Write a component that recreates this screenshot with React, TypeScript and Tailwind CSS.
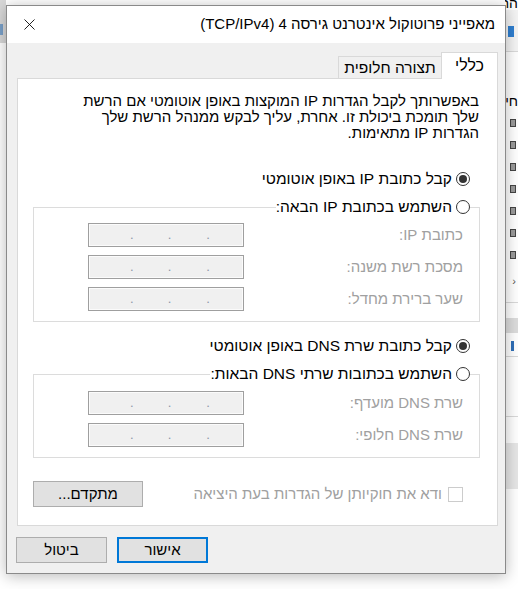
import { X } from "lucide-react";

function Radio({ checked, label }: { checked?: boolean; label: string }) {
  return (
    <div className="flex items-center gap-[4px] h-[20px] bg-white">
      <span className="w-[14px] h-[14px] rounded-full border border-[#333333] bg-white flex items-center justify-center">
        {checked && <span className="w-[8px] h-[8px] rounded-full bg-[#333333]" />}
      </span>
      <span className="text-[15.5px] text-black leading-[20px]">{label}</span>
    </div>
  );
}

function IpField() {
  return (
    <div
      dir="ltr"
      className="w-[156px] h-[24px] border border-[#9f9f9f] bg-[#f0f0f0] shadow-[inset_0_0_0_1px_#fbfbfb] flex items-end pb-[5px] pl-[41px] text-[13px] leading-none text-[#8c96a8]"
    >
      <span>.</span>
      <span className="ml-[34px]">.</span>
      <span className="ml-[35px]">.</span>
    </div>
  );
}

function IpRow({ label }: { label: string }) {
  return (
    <div className="flex items-center justify-between h-[24px] pr-[16px] pl-[54px]">
      <span className="text-[15px] text-[#a0a0a0]">{label}</span>
      <IpField />
    </div>
  );
}

function Button({ label, primary }: { label: string; primary?: boolean }) {
  return (
    <button
      className={
        primary
          ? "w-[91px] h-[26px] border-2 border-[#0078d7] bg-[#e1e1e1] text-[15px] text-black"
          : "w-[91px] h-[26px] border border-[#adadad] bg-[#e1e1e1] text-[15px] text-black"
      }
    >
      {label}
    </button>
  );
}

function Backdrop() {
  return (
    <div className="absolute inset-0 flex justify-between bg-white">
      {/* left edge of window behind */}
      <div className="w-[6px] flex flex-col">
        <div className="h-[43px] bg-[#d8d8d8] flex flex-col pt-[24px]">
          <div className="w-[3px] h-[11px] bg-[#7aa0c8]" />
        </div>
      </div>

      {/* right edge of window behind */}
      <div dir="rtl" className="w-[13px] flex flex-col overflow-hidden text-[14px]">
        <div className="h-[10px] overflow-hidden">
          <div className="-mt-[7px] whitespace-nowrap text-black">התחבר באמצעות:</div>
        </div>
        <div className="h-[42px] bg-[#f4f4f4] border-b border-[#d9d9d9] flex flex-col items-end pt-[16px] pl-[3px]">
          <div className="w-[6px] h-[11px] bg-[#2f7fd0]" />
        </div>
        <div className="h-[40px]" />
        <div className="h-[18px] whitespace-nowrap leading-[18px] text-black">חיבור</div>
        <div className="flex flex-col gap-[14px] pt-[9px] items-end pl-[5px]">
          {[0, 1, 2, 3, 4, 5, 6].map((i) => (
            <div key={i} className="w-[6px] h-[8px] border border-[#444] bg-[#9a9a9a]" />
          ))}
        </div>
        <div className="h-[18px] mt-[14px] text-[#555] text-[11px] pr-[2px]">‹</div>
        <div className="h-[12px] border-b border-[#d9d9d9]" />
        <div className="h-[15px] mt-[15px] bg-[#dcdcdc]" />
        <div className="h-[16px] mt-[8px] border-b border-[#d9d9d9] flex justify-end pl-[6px]">
          <div className="w-[3px] h-[10px] bg-[#2f6fb8]" />
        </div>
        <div className="h-[60px] border-b border-[#d9d9d9]" />
        <div className="h-[46px] mt-[26px] bg-[#e6e6e6]" />
      </div>
    </div>
  );
}

export default function App() {
  return (
    <div className="relative w-[518px] h-[589px] overflow-hidden bg-white font-['Liberation_Sans','DejaVu_Sans',sans-serif]">
      <Backdrop />

      <div
        dir="rtl"
        className="absolute left-[6px] top-[5px] w-[500px] h-[569px] border border-[#8a8a8a] bg-[#f0f0f0] shadow-[0_2px_14px_rgba(0,0,0,0.28)] flex flex-col"
      >
        {/* title bar */}
        <div className="h-[37px] bg-white flex items-center justify-between pr-[10px] pl-[13px]">
          <span className="text-[15px] text-black">מאפייני פרוטוקול אינטרנט גירסה 4 (TCP/IPv4)</span>
          <X size={19} strokeWidth={1.1} className="text-black" />
        </div>

        {/* body */}
        <div className="flex flex-col pt-[9px] pr-[7px] pl-[10px]">
          {/* tabs */}
          <div className="flex items-end h-[27px] -mb-[1px] relative z-10">
            <div className="w-[57px] h-[27px] bg-white border-t border-x border-[#d9d9d9] flex items-center justify-center text-[16px] text-black pb-[1px]">
              כללי
            </div>
            <div className="w-[103px] h-[22px] mb-[1px] bg-[#f0f0f0] border-t border-l border-[#d9d9d9] flex items-center justify-center text-[15.5px] text-black">
              תצורה חלופית
            </div>
          </div>

          {/* panel */}
          <div className="h-[448px] bg-white border border-[#d9d9d9] flex flex-col">
            <p className="pt-[14px] pr-[18px] text-[15px] leading-[16px] text-black whitespace-nowrap">
              באפשרותך לקבל הגדרות IP המוקצות באופן אוטומטי אם הרשת
              <br />
              שלך תומכת ביכולת זו. אחרת, עליך לבקש ממנהל הרשת שלך
              <br />
              הגדרות IP מתאימות.
            </p>

            <div className="mt-[28px] pr-[27px] flex">
              <Radio checked label="קבל כתובת IP באופן אוטומטי" />
            </div>

            <fieldset className="mt-[8px] mr-[17px] ml-[15px] border border-[#dcdcdc] pb-[10px]">
              <legend className="mr-[9px]">
                <Radio label="השתמש בכתובת IP הבאה:" />
              </legend>
              <div className="mt-[6px] flex flex-col gap-[8px]">
                <IpRow label="כתובת IP:" />
                <IpRow label="מסכת רשת משנה:" />
                <IpRow label="שער ברירת מחדל:" />
              </div>
            </fieldset>

            <div className="mt-[14px] pr-[27px] flex">
              <Radio checked label="קבל כתובת שרת DNS באופן אוטומטי" />
            </div>

            <fieldset className="mt-[8px] mr-[17px] ml-[15px] border border-[#dcdcdc] pb-[10px]">
              <legend className="mr-[9px]">
                <Radio label="השתמש בכתובות שרתי DNS הבאות:" />
              </legend>
              <div className="mt-[7px] flex flex-col gap-[8px]">
                <IpRow label="שרת DNS מועדף:" />
                <IpRow label="שרת DNS חלופי:" />
              </div>
            </fieldset>

            <div className="mt-[23px] flex items-center justify-between pr-[34px] pl-[15px]">
              <div className="flex items-center gap-[6px]">
                <span className="w-[15px] h-[15px] shrink-0 border border-[#cccccc] bg-white" />
                <span className="text-[15px] text-[#a0a0a0]">ודא את חוקיותן של הגדרות בעת היציאה</span>
              </div>
              <button className="w-[110px] h-[26px] border border-[#adadad] bg-[#e1e1e1] text-[15px] text-black">
                מתקדם...
              </button>
            </div>
          </div>

          {/* dialog buttons */}
          <div className="mt-[11px] flex justify-end gap-[10px] -ml-[1px]">
            <Button primary label="אישור" />
            <Button label="ביטול" />
          </div>
        </div>
      </div>
    </div>
  );
}
